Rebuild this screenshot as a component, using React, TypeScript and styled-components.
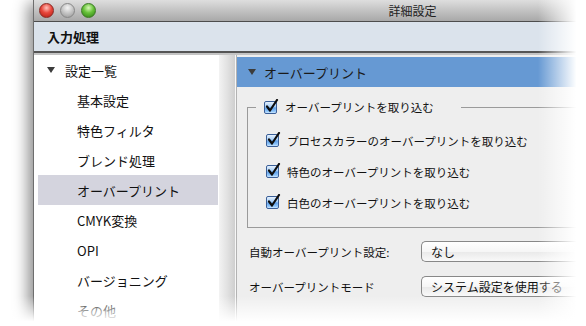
import React from 'react';
import styled, { createGlobalStyle, css } from 'styled-components';

const GlobalStyle = createGlobalStyle`
  html, body {
    margin: 0;
    padding: 0;
    background: #fff;
  }
  body {
    font-family: "Noto Sans CJK JP", "Noto Sans", sans-serif;
    color: #111;
  }
`;

const sidebarItems = [
  '基本設定',
  '特色フィルタ',
  'ブレンド処理',
  'オーバープリント',
  'CMYK変換',
  'OPI',
  'バージョニング',
  'その他',
];

const options = [
  'プロセスカラーのオーバープリントを取り込む',
  '特色のオーバープリントを取り込む',
  '白色のオーバープリントを取り込む',
];

const Checkbox = () => (
  <Box>
    <svg width="15" height="15" viewBox="0 0 15 15">
      <path
        d="M3 7.5 L6 11.5 L13 1"
        fill="none"
        stroke="#0d0d0d"
        strokeWidth="2.2"
        strokeLinecap="round"
        strokeLinejoin="round"
      />
    </svg>
  </Box>
);

const App = () => (
  <Stage>
    <GlobalStyle />
    <Window>
      <TitleBar>
        <Lights>
          <Light color="red" />
          <Light color="gray" />
          <Light color="green" />
        </Lights>
        <WindowTitle>詳細設定</WindowTitle>
        <span />
      </TitleBar>
      <Toolbar>入力処理</Toolbar>
      <Body>
        <Sidebar>
          <GroupRow>
            <Triangle />
            設定一覧
          </GroupRow>
          {sidebarItems.map(item => (
            <Item key={item} selected={item === 'オーバープリント'}>
              {item}
            </Item>
          ))}
        </Sidebar>
        <Splitter />
        <Content>
          <SectionHeader>
            <Triangle />
            オーバープリント
          </SectionHeader>
          <Panel>
            <Group>
              <Legend>
                <Checkbox />
                オーバープリントを取り込む
              </Legend>
              {options.map(option => (
                <OptionRow key={option}>
                  <Checkbox />
                  {option}
                </OptionRow>
              ))}
            </Group>
            <Form>
              <Label>自動オーバープリント設定:</Label>
              <Popup>なし</Popup>
              <Label>オーバープリントモード</Label>
              <Popup>システム設定を使用する</Popup>
            </Form>
          </Panel>
        </Content>
      </Body>
    </Window>
    <RightFade />
    <BottomFade />
  </Stage>
);

const Stage = styled.div`
  position: relative;
  width: 586px;
  height: 326px;
  overflow: hidden;
  background: #fff;
  padding-left: 33px;
  box-sizing: border-box;
`;

const Window = styled.div`
  width: 757px;
  height: 360px;
  display: flex;
  flex-direction: column;
  border-left: 1px solid #6e6e6e;
  box-shadow: -5px 3px 14px rgba(0, 0, 0, 0.45);
  background: #eee;
`;

const TitleBar = styled.div`
  height: 21px;
  display: grid;
  grid-template-columns: 1fr auto 1fr;
  align-items: center;
  background: linear-gradient(#dedede, #bdbdbd 60%, #a8a8a8);
  border-bottom: 1px solid #4d4d4d;
`;

const Lights = styled.div`
  display: flex;
  gap: 6px;
  padding-left: 5px;
`;

const lightColors = {
  red: css`
    background: radial-gradient(circle at 50% 30%, #ffc2bb 0, #e8473c 45%, #b01c12 100%);
    border-color: #8a2a24;
  `,
  gray: css`
    background: radial-gradient(circle at 50% 30%, #f4f4f4 0, #c3c3c3 50%, #959595 100%);
    border-color: #888;
  `,
  green: css`
    background: radial-gradient(circle at 50% 30%, #d8f7b8 0, #67c23a 45%, #2f7d14 100%);
    border-color: #3b7a24;
  `,
};

const Light = styled.span<{ color: 'red' | 'gray' | 'green' }>`
  width: 13px;
  height: 13px;
  border-radius: 50%;
  border: 1px solid;
  ${props => lightColors[props.color]}
`;

const WindowTitle = styled.div`
  font-size: 12px;
  color: #222;
`;

const Toolbar = styled.div`
  height: 29px;
  display: flex;
  align-items: center;
  padding-left: 13px;
  font-size: 13px;
  font-weight: 700;
  background: #dbe3ec;
  border-bottom: 2px solid #555;
  box-shadow: 0 2px 0 #c4c4c4;
  margin-bottom: 2px;
`;

const Body = styled.div`
  flex: 1;
  display: flex;
`;

const Sidebar = styled.div`
  width: 185px;
  background: #fff;
  display: flex;
  flex-direction: column;
  font-size: 13px;
`;

const GroupRow = styled.div`
  height: 30px;
  display: flex;
  align-items: center;
  gap: 10px;
  padding-left: 13px;
`;

const Item = styled.div<{ selected?: boolean }>`
  height: 30px;
  display: flex;
  align-items: center;
  margin: 0 1px 0 4px;
  padding-left: 39px;
  background: ${props => (props.selected ? '#d4d4de' : 'transparent')};
`;

const Triangle = styled.span`
  width: 0;
  height: 0;
  border-left: 4px solid transparent;
  border-right: 4px solid transparent;
  border-top: 6px solid #3c3c3c;
`;

const Splitter = styled.div`
  width: 16px;
  background: linear-gradient(to right, #f3f3f3, #e2e2e2 50%, #cfcfcf);
  border-right: 1px solid #f7f7f7;
`;

const Content = styled.div`
  flex: 1;
  background: #eeeeee;
  border-left: 1px solid #b3b3b3;
  padding-top: 2px;
`;

const SectionHeader = styled.div`
  height: 30px;
  display: flex;
  align-items: center;
  gap: 8px;
  padding-left: 11px;
  font-size: 13px;
  background: #6699d3;
  color: #1a1a1a;
`;

const Panel = styled.div`
  padding: 11px 0 0 10px;
  font-size: 11.5px;
`;

const Group = styled.fieldset`
  margin: 0;
  padding: 9px 0 9px 8px;
  border: 1px solid #9a9a9a;
  border-right: none;
  display: flex;
  flex-direction: column;
`;

const Legend = styled.legend`
  display: flex;
  align-items: center;
  gap: 8px;
  padding: 0 27px 0 8px;
  height: 18px;
`;

const OptionRow = styled.div`
  height: 31px;
  display: flex;
  align-items: center;
  gap: 8px;
  padding-left: 10px;
`;

const Box = styled.span`
  position: relative;
  width: 11px;
  height: 11px;
  border: 1px solid #3a5f98;
  border-radius: 2px;
  background: linear-gradient(#e4f0fd, #a9d0f8 40%, #5d9ee8 55%, #8fc6fb 85%, #c6e4ff);
  box-shadow: inset 0 0 1px rgba(255, 255, 255, 0.9);

  svg {
    position: absolute;
    left: -1px;
    top: -3px;
  }
`;

const Form = styled.div`
  display: grid;
  grid-template-columns: 172px 1fr;
  grid-auto-rows: 35px;
  align-items: center;
  margin-top: 6px;
  padding-left: 2px;
`;

const Label = styled.div`
  color: #111;
`;

const Popup = styled.div`
  height: 19px;
  display: flex;
  align-items: center;
  padding-left: 9px;
  font-size: 12px;
  border: 1px solid #888;
  border-radius: 5px 0 0 5px;
  border-right: none;
  background: linear-gradient(#ffffff, #f6f6f6 50%, #e9e9e9 52%, #f9f9f9);
`;

const RightFade = styled.div`
  position: absolute;
  top: 0;
  right: 0;
  width: 48px;
  height: 100%;
  background: linear-gradient(to right, rgba(255, 255, 255, 0), #fff 80%);
`;

const BottomFade = styled.div`
  position: absolute;
  left: 0;
  bottom: 0;
  width: 100%;
  height: 30px;
  background: linear-gradient(rgba(255, 255, 255, 0), #fff 85%);
`;

export default App;
